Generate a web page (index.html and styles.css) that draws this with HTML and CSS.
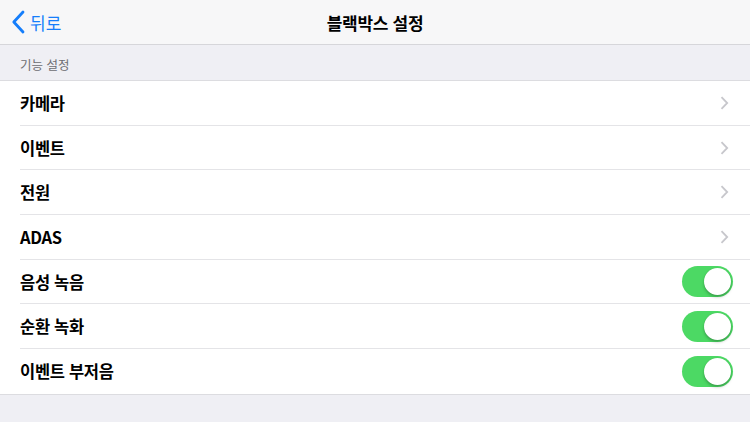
FILE: index.html
```html
<!DOCTYPE html>
<html lang="ko">

<head>
    <meta charset="UTF-8">
    <meta name="viewport" content="width=device-width, initial-scale=1.0">
    <title>블랙박스 설정</title>
    <link rel="stylesheet" href="styles.css">
</head>

<body>
    <div class="navbar">
        <div class="back">
            <svg class="back-icon" width="14" height="24" viewBox="0 0 14 24">
                <path d="M12 2 L2.8 12 L12 22" fill="none" stroke="#157efb" stroke-width="2.8" stroke-linecap="round" stroke-linejoin="round" />
            </svg>
            <span>뒤로</span>
        </div>
        <div class="title">블랙박스 설정</div>
    </div>

    <div class="section-header">기능 설정</div>

    <div class="list">
        <div class="row">
            <span class="label">카메라</span>
            <svg class="chevron" width="9" height="14" viewBox="0 0 9 14"><path d="M1.5 1.2 L7.2 7 L1.5 12.8" fill="none" stroke="#c7c7cc" stroke-width="1.8" /></svg>
        </div>
        <div class="row">
            <span class="label">이벤트</span>
            <svg class="chevron" width="9" height="14" viewBox="0 0 9 14"><path d="M1.5 1.2 L7.2 7 L1.5 12.8" fill="none" stroke="#c7c7cc" stroke-width="1.8" /></svg>
        </div>
        <div class="row">
            <span class="label">전원</span>
            <svg class="chevron" width="9" height="14" viewBox="0 0 9 14"><path d="M1.5 1.2 L7.2 7 L1.5 12.8" fill="none" stroke="#c7c7cc" stroke-width="1.8" /></svg>
        </div>
        <div class="row">
            <span class="label">ADAS</span>
            <svg class="chevron" width="9" height="14" viewBox="0 0 9 14"><path d="M1.5 1.2 L7.2 7 L1.5 12.8" fill="none" stroke="#c7c7cc" stroke-width="1.8" /></svg>
        </div>
        <div class="row">
            <span class="label">음성 녹음</span>
            <div class="switch on"><div class="knob"></div></div>
        </div>
        <div class="row">
            <span class="label">순환 녹화</span>
            <div class="switch on"><div class="knob"></div></div>
        </div>
        <div class="row">
            <span class="label">이벤트 부저음</span>
            <div class="switch on"><div class="knob"></div></div>
        </div>
    </div>
</body>

</html>
```

FILE: styles.css
```css
body {
    margin: 0;
    background-color: #efeff4;
    font-family: "Noto Sans CJK KR", "Noto Sans", sans-serif;
    color: #000;
    width: 750px;
    height: 422px;
    overflow: hidden;
}

.navbar {
    height: 44px;
    background-color: #f7f7f8;
    border-bottom: 1px solid #d6d6da;
    display: flex;
    align-items: center;
    justify-content: center;
    position: relative;
}

.back {
    position: absolute;
    left: 11px;
    top: 0;
    height: 44px;
    display: flex;
    align-items: center;
    gap: 5px;
    color: #157efb;
    font-size: 17px;
}

.back-icon {
    display: block;
}

.title {
    font-size: 17px;
    font-weight: 700;
    letter-spacing: -0.3px;
}

.section-header {
    height: 35px;
    box-sizing: border-box;
    padding: 10px 0 0 20px;
    font-size: 12.5px;
    color: #6d6d72;
    line-height: 20px;
}

.list {
    background-color: #fff;
    border-top: 1px solid #dcdce0;
    border-bottom: 1px solid #dcdce0;
}

.row {
    height: 44.7px;
    margin-left: 20px;
    padding-right: 17px;
    display: flex;
    align-items: center;
    justify-content: space-between;
    border-bottom: 1px solid #e4e4e7;
    box-sizing: border-box;
}

.row:last-child {
    border-bottom: none;
}

.label {
    font-size: 16.5px;
    font-weight: 700;
    letter-spacing: -0.3px;
}

.chevron {
    display: block;
    margin-right: 4px;
}

.switch {
    width: 51px;
    height: 31px;
    border-radius: 16px;
    background-color: #e5e5ea;
    position: relative;
}

.switch.on {
    background-color: #4cd964;
}

.knob {
    position: absolute;
    top: 2px;
    left: 2px;
    width: 27px;
    height: 27px;
    border-radius: 50%;
    background-color: #fff;
    box-shadow: 0 2px 3px rgba(0, 0, 0, 0.25), 0 0 1px rgba(0, 0, 0, 0.15);
}

.switch.on .knob {
    left: 22px;
}
```
